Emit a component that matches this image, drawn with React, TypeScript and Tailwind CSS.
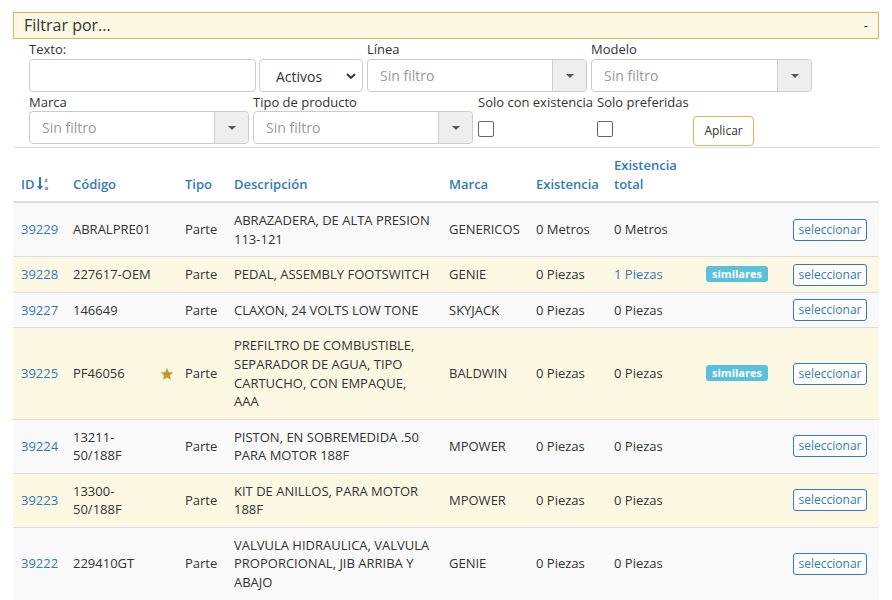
import React from "react";

const font = { fontFamily: '"Open Sans", "Liberation Sans", sans-serif' };

function Combo({ w }: { w: string }) {
  return (
    <div className={`flex h-[33px] ${w} rounded-[4px] border border-[#cccccc] bg-white`}>
      <div className="flex flex-1 items-center pl-[12px] pt-[2px] text-[14px] text-[#999999]">Sin filtro</div>
      <div className="flex w-[34px] items-center justify-center rounded-r-[3px] border-l border-[#cccccc] bg-[#eeeeee]">
        <svg width="8" height="4" viewBox="0 0 8 4">
          <path d="M0 0 L8 0 L4 4 Z" fill="#555555" />
        </svg>
      </div>
    </div>
  );
}

function Check() {
  return <span className="block h-[16px] w-[16px] rounded-[2px] border border-[#666666] bg-white" />;
}

type Row = {
  id: string;
  code: string;
  star?: boolean;
  desc: string;
  marca: string;
  ex: string;
  total: string;
  totalLink?: boolean;
  sim?: boolean;
};

const rows: Row[] = [
  { id: "39229", code: "ABRALPRE01", desc: "ABRAZADERA, DE ALTA PRESION 113-121", marca: "GENERICOS", ex: "0 Metros", total: "0 Metros" },
  { id: "39228", code: "227617-OEM", desc: "PEDAL, ASSEMBLY FOOTSWITCH", marca: "GENIE", ex: "0 Piezas", total: "1 Piezas", totalLink: true, sim: true },
  { id: "39227", code: "146649", desc: "CLAXON, 24 VOLTS LOW TONE", marca: "SKYJACK", ex: "0 Piezas", total: "0 Piezas" },
  { id: "39225", code: "PF46056", star: true, desc: "PREFILTRO DE COMBUSTIBLE, SEPARADOR DE AGUA, TIPO CARTUCHO, CON EMPAQUE, AAA", marca: "BALDWIN", ex: "0 Piezas", total: "0 Piezas", sim: true },
  { id: "39224", code: "13211-50/188F", desc: "PISTON, EN SOBREMEDIDA .50 PARA MOTOR 188F", marca: "MPOWER", ex: "0 Piezas", total: "0 Piezas" },
  { id: "39223", code: "13300-50/188F", desc: "KIT DE ANILLOS, PARA MOTOR 188F", marca: "MPOWER", ex: "0 Piezas", total: "0 Piezas" },
  { id: "39222", code: "229410GT", desc: "VALVULA HIDRAULICA, VALVULA PROPORCIONAL, JIB ARRIBA Y ABAJO", marca: "GENIE", ex: "0 Piezas", total: "0 Piezas" },
];

export default function App() {
  const td = "px-[8px] py-[8px] align-middle border-t border-[#dddddd]";
  const th = "px-[8px] py-[8px] align-bottom text-left font-semibold text-[#337ab7] border-b-2 border-[#dddddd]";
  return (
    <div style={font} className="w-[892px] bg-white pt-[12px] text-[13px] leading-[18.57px] text-[#333333]">
      <div className="mx-[13px] flex h-[27px] items-center justify-between border border-[#d8b652] bg-[#fcf8e3] pl-[10px] pr-[10px] text-[16px] text-[#333333]">
        <span>Filtrar por...</span>
        <span className="text-[13px]">-</span>
      </div>

      <div className="mx-[13px] px-[16px] pt-[1px]">
        <div className="flex items-end gap-[3px]">
          <div className="flex flex-col">
            <label className="h-[19px]">Texto:</label>
            <input className="h-[33px] w-[227px] rounded-[4px] border border-[#cccccc] bg-white outline-none" />
          </div>
          <div className="relative flex h-[33px] w-[104px] items-center rounded-[4px] border border-[#cccccc] bg-white pl-[16px] pt-[4px] text-[14px]">
            <span>Activos</span>
            <svg className="absolute right-[6px] top-[13px]" width="10" height="7" viewBox="0 0 10 7">
              <path d="M1 1 L5 5 L9 1" fill="none" stroke="#333333" strokeWidth="1.8" />
            </svg>
          </div>
          <div className="ml-[1px] flex flex-col">
            <label className="h-[19px]">Línea</label>
            <Combo w="w-[220px]" />
          </div>
          <div className="ml-[1px] flex flex-col">
            <label className="h-[19px]">Modelo</label>
            <Combo w="w-[221px]" />
          </div>
        </div>

        <div className="flex items-start gap-[4px] pt-[1px]">
          <div className="flex flex-col">
            <label className="h-[18px]">Marca</label>
            <Combo w="w-[220px]" />
          </div>
          <div className="flex flex-col">
            <label className="h-[18px]">Tipo de producto</label>
            <Combo w="w-[220px]" />
          </div>
          <div className="ml-[1px] flex flex-col">
            <label className="h-[18px] whitespace-nowrap">Solo con existencia</label>
            <div className="mt-[10px]">
              <Check />
            </div>
          </div>
          <div className="flex w-[92px] flex-col">
            <label className="h-[18px] whitespace-nowrap">Solo preferidas</label>
            <div className="mt-[10px]">
              <Check />
            </div>
          </div>
          <button className="mt-[23px] h-[30px] w-[61px] rounded-[4px] border border-[#d8b652] bg-white text-[12px] text-[#333333]">
            Aplicar
          </button>
        </div>
      </div>

      <div className="mx-[13px] mt-[1px]">
        <table className="w-[866px] table-fixed border-collapse border-t border-[#dddddd]">
          <colgroup>
            <col className="w-[52px]" />
            <col className="w-[98px]" />
            <col className="w-[14px]" />
            <col className="w-[49px]" />
            <col className="w-[215px]" />
            <col className="w-[87px]" />
            <col className="w-[78px]" />
            <col className="w-[92px]" />
            <col className="w-[87px]" />
            <col className="w-[94px]" />
          </colgroup>
          <thead>
            <tr>
              <th className={th}>
                <span className="inline-flex items-center">
                  ID
                  <span className="ml-[2px] inline-flex items-center">
                    <svg width="6" height="13" viewBox="0 0 6 13">
                      <path d="M2 0 H4 V9 H6 L3 13 L0 9 H2 Z" fill="#337ab7" />
                    </svg>
                    <span className="ml-[2px] flex flex-col text-[6px] font-bold leading-[8px]">
                      <span>z</span>
                      <span>a</span>
                    </span>
                  </span>
                </span>
              </th>
              <th className={th}>Código</th>
              <th className={th}></th>
              <th className={th}>Tipo</th>
              <th className={th}>Descripción</th>
              <th className={th}>Marca</th>
              <th className={`${th} whitespace-nowrap`}>Existencia</th>
              <th className={th}>Existencia total</th>
              <th className={th}></th>
              <th className={th}></th>
            </tr>
          </thead>
          <tbody>
            {rows.map((r, i) => (
              <tr key={r.id} className={i % 2 === 0 ? "bg-[#f9f9f9]" : "bg-[#fcf8e3]"}>
                <td className={`${td} text-[#337ab7]`}>{r.id}</td>
                <td className={td}>{r.code}</td>
                <td className="border-t border-[#dddddd] p-0 align-middle">
                  {r.star && (
                    <svg className="-ml-[3px] block" width="14" height="14" viewBox="0 0 24 24">
                      <path
                        d="M12 1.5 L15.1 8.6 L22.8 9.3 L17 14.4 L18.7 22 L12 18 L5.3 22 L7 14.4 L1.2 9.3 L8.9 8.6 Z"
                        fill="#c49a22"
                      />
                    </svg>
                  )}
                </td>
                <td className={td}>Parte</td>
                <td className={td}>{r.desc}</td>
                <td className={td}>{r.marca}</td>
                <td className={td}>{r.ex}</td>
                <td className={`${td} ${r.totalLink ? "text-[#337ab7]" : ""}`}>{r.total}</td>
                <td className={td}>
                  {r.sim && (
                    <span className="-mt-[3px] inline-block rounded-[3px] bg-[#5bc0de] px-[6px] align-middle text-[11px] font-bold leading-[16px] text-white">
                      similares
                    </span>
                  )}
                </td>
                <td className="border-t border-[#dddddd] px-[8px] py-[6px] align-middle">
                  <button className="h-[22px] w-[74px] rounded-[3px] border border-[#337ab7] bg-white text-[12px] leading-[18px] text-[#337ab7]">
                    seleccionar
                  </button>
                </td>
              </tr>
            ))}
          </tbody>
        </table>
      </div>
    </div>
  );
}
